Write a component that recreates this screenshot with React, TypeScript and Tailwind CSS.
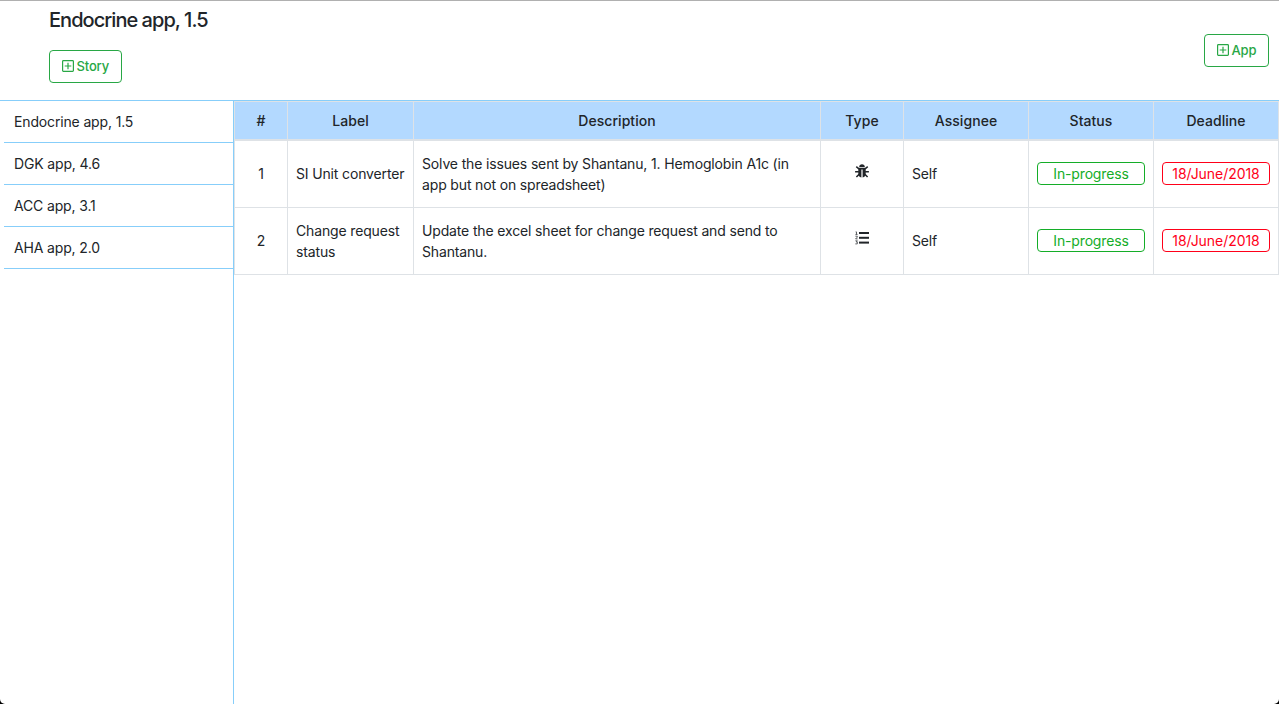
const apps = ["Endocrine app, 1.5", "DGK app, 4.6", "ACC app, 3.1", "AHA app, 2.0"];

const columns = [
  { name: "#", width: "w-[53px]" },
  { name: "Label", width: "w-[126px]" },
  { name: "Description", width: "w-[407px]" },
  { name: "Type", width: "w-[83px]" },
  { name: "Assignee", width: "w-[125px]" },
  { name: "Status", width: "w-[125px]" },
  { name: "Deadline", width: "w-[126px]" },
];

function BugIcon({ className }: { className?: string }) {
  return (
    <svg viewBox="0 0 14 14" className={className} fill="currentColor">
      <path d="M4.2 3C4.2 1.2 5.4.2 7 .2S9.8 1.2 9.8 3z" />
      <path d="M3.3 3.7h7.4v6c0 2.2-1 3.500-3.100 3.700V5.500H6.400v7.900C4.300 13.200 3.300 11.900 3.300 9.700z" />
      <path
        d="M1.300 2.700l2.700 2.300M12.700 2.700L10 5M.1 7.700h3.800M13.900 7.700h-3.800M1.400 13l2.800-2.800M12.600 13l-2.800-2.800"
        fill="none"
        stroke="currentColor"
        strokeWidth="1.600"
      />
    </svg>
  );
}

function OrderedListIcon({ className }: { className?: string }) {
  return (
    <svg viewBox="0 0 14 14" className={className} fill="currentColor">
      <rect x="4" y="1" width="10" height="2" />
      <rect x="4" y="5.8" width="10" height="2" />
      <rect x="4" y="10.6" width="10" height="2" />
      <path
        d="M.6.9h.9v2.5M.4 3.4h2.2M.4 5.2h1.9v.9L.6 7.9h2M.4 9.8h2L1.3 11h1v1.9H.3"
        fill="none"
        stroke="currentColor"
        strokeWidth="0.7"
      />
    </svg>
  );
}

function PlusSquareIcon() {
  return (
    <svg viewBox="0 0 12 12" className="mb-px size-[12px]" fill="none" stroke="currentColor">
      <rect x="0.6" y="0.6" width="10.8" height="10.8" rx="0.8" strokeWidth="1.2" />
      <path d="M6 2.7v6.6M2.7 6h6.6" strokeWidth="1.2" />
    </svg>
  );
}

const stories = [
  {
    label: ["SI Unit converter"],
    description: ["Solve the issues sent by Shantanu, 1. Hemoglobin A1c (in", "app but not on spreadsheet)"],
    Icon: BugIcon,
  },
  {
    label: ["Change request", "status"],
    description: ["Update the excel sheet for change request and send to", "Shantanu."],
    Icon: OrderedListIcon,
  },
];

function AddButton({ text, width }: { text: string; width: string }) {
  return (
    <button className={`${width} flex h-[33px] items-center gap-[3px] rounded border border-[#28a745] pl-[11.5px] text-[13px] font-medium tracking-[-0.15px] text-[#28a745]`}>
      <PlusSquareIcon />
      <span>{text}</span>
    </button>
  );
}

function Lines({ lines }: { lines: string[] }) {
  return (
    <>
      {lines.map((line) => (
        <div key={line} className="whitespace-nowrap">{line}</div>
      ))}
    </>
  );
}

const cell = "border-b border-l border-[#dee2e6] px-2 py-0 last:border-r";
const shortCell = "border-b border-l border-[#dee2e6] px-2 pt-0 pb-0.5 last:border-r";

export default function App() {
  return (
    <div className="h-[704px] w-[1279px] overflow-hidden bg-[linear-gradient(#fff_50%,#000_50%)]">
      <div className="flex h-full flex-col overflow-hidden rounded-b-[5px] border-t border-[#b0b0b0] bg-white font-['Inter',sans-serif] text-sm leading-[21px] tracking-[-0.15px] text-[#212529]">
        <header className="flex h-[100px] shrink-0 items-start justify-between border-b border-[#87cefa] pr-[10px] pl-[49px]">
          <div className="flex flex-col items-start">
            <h1 className="mt-[7px] mb-[18px] text-[20px] leading-6 font-medium tracking-[-0.96px]">Endocrine app, 1.5</h1>
            <AddButton text="Story" width="w-[73px]" />
          </div>
          <div className="mt-[33px]">
            <AddButton text="App" width="w-[65px]" />
          </div>
        </header>
        <main className="flex min-h-0 flex-1">
          <nav className="w-[234px] shrink-0 border-r border-[#87cefa] pl-1">
            {apps.map((app) => (
              <div key={app} className="flex h-[42px] items-center border-b border-[#87cefa] pl-[10px]">{app}</div>
            ))}
          </nav>
          <section className="w-[1045px]">
            <table className="w-full table-fixed border-separate border-spacing-0">
              <thead>
                <tr className="h-10 bg-[#b3d9ff]">
                  {columns.map(({ name, width }) => (
                    <th key={name} className={`${width} border-t border-b-2 border-l border-[#dee2e6] p-0 text-center font-medium tracking-[0.06px] last:border-r`}>{name}</th>
                  ))}
                </tr>
              </thead>
              <tbody>
                {stories.map(({ label, description, Icon }, index) => (
                  <tr key={index} className="h-[67px]">
                    <td className={`${shortCell} text-center`}>{index + 1}</td>
                    <td className={label.length > 1 ? cell : shortCell}><Lines lines={label} /></td>
                    <td className={cell}><Lines lines={description} /></td>
                    <td className={cell}><Icon className="mx-auto mb-[6px] block size-[14px]" /></td>
                    <td className={shortCell}>Self</td>
                    <td className={shortCell}>
                      <div className="flex h-[23px] items-center justify-center rounded border border-[#14ad28] text-[#14ad28]">In-progress</div>
                    </td>
                    <td className={shortCell}>
                      <div className="flex h-[23px] items-center justify-center rounded border border-[#ff0019] tracking-[-0.05px] text-[#ff0019]">18/June/2018</div>
                    </td>
                  </tr>
                ))}
              </tbody>
            </table>
          </section>
        </main>
      </div>
    </div>
  );
}
